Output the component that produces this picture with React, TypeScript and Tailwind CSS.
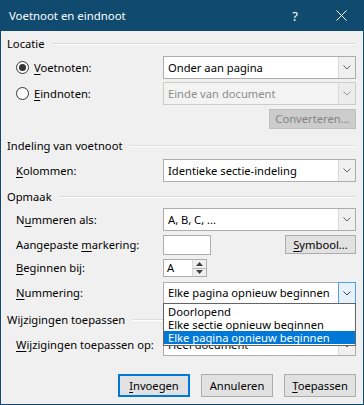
import type { ReactNode } from "react";

const Chevron = ({ color = "#606060" }: { color?: string }) => (
  <svg width="8" height="5" viewBox="0 0 8 5" fill="none">
    <path d="M0.5 0.5 L4 4 L7.5 0.5" stroke={color} strokeWidth="1" />
  </svg>
);

const U = ({ children }: { children: ReactNode }) => (
  <span className="underline underline-offset-2">{children}</span>
);

const Header = ({ title, className = "" }: { title: string; className?: string }) => (
  <div className={`flex items-center h-[16px] pl-[6px] pr-[8px] ${className}`}>
    <span>{title}</span>
    <div className="flex-1 ml-[7px] h-[2px] border-t border-t-[#dcdcdc] border-b border-b-white" />
  </div>
);

const Combo = ({
  text,
  disabled,
  active,
}: {
  text: string;
  disabled?: boolean;
  active?: boolean;
}) => (
  <div
    className={`w-[193px] h-full flex border ${
      disabled ? "border-[#cccccc] bg-[#f3f3f3]" : "border-[#adadad] bg-white"
    }`}
  >
    <div className={`flex-1 flex items-center pl-[4px] ${disabled ? "text-[#8c8c8c]" : ""}`}>
      {text}
    </div>
    {active ? (
      <div className="w-[18px] -my-px -mr-px border border-[#569de5] bg-[#e5f1fb] flex items-center justify-center">
        <Chevron color="#404040" />
      </div>
    ) : (
      <div
        className={`w-[17px] border-l flex items-center justify-center ${
          disabled ? "border-[#dadada] bg-[#ececec]" : "border-[#dadada] bg-[#f0f0f0]"
        }`}
      >
        <Chevron color={disabled ? "#9a9a9a" : "#606060"} />
      </div>
    )}
  </div>
);

const Button = ({
  children,
  primary,
  disabled,
  className = "",
}: {
  children: ReactNode;
  primary?: boolean;
  disabled?: boolean;
  className?: string;
}) => (
  <div
    className={`flex items-center justify-center ${
      primary
        ? "border-2 border-[#0078d7] bg-[#e1e1e1]"
        : disabled
        ? "border border-[#bfbfbf] bg-[#cccccc] text-[#838383]"
        : "border border-[#adadad] bg-[#e1e1e1]"
    } ${className}`}
  >
    {children}
  </div>
);

const Row = ({
  label,
  children,
  className = "",
}: {
  label: ReactNode;
  children: ReactNode;
  className?: string;
}) => (
  <div className={`flex items-stretch ${className}`}>
    <div className="w-[162px] flex items-center pl-[15px]">{label}</div>
    {children}
  </div>
);

const Radio = ({ checked }: { checked?: boolean }) => (
  <div className="w-[13px] h-[13px] rounded-full border border-[#333333] bg-white flex items-center justify-center">
    {checked && <div className="w-[7px] h-[7px] rounded-full bg-[#333333]" />}
  </div>
);

export default function App() {
  return (
    <div className="w-[364px] h-[405px] bg-[#f0f0f0] border-x border-b border-[#104b6f] flex flex-col font-['Segoe_UI','Noto_Sans',sans-serif] text-[11.2px] leading-[16px] text-black whitespace-nowrap relative select-none">
      {/* Title bar */}
      <div className="h-[31px] -mx-px bg-[#104b6f] text-white flex items-center pl-[9px]">
        <span className="flex-1 text-[11.4px]">Voetnoot en eindnoot</span>
        <span className="w-[46px] text-center text-[13px]">?</span>
        <div className="w-[46px] flex items-center justify-center">
          <svg width="11" height="11" viewBox="0 0 11 11">
            <path d="M0.5 0.5 L10.5 10.5 M10.5 0.5 L0.5 10.5" stroke="white" strokeWidth="1" />
          </svg>
        </div>
      </div>

      <Header title="Locatie" className="mt-[5px]" />

      <div className="flex items-stretch h-[23px] mt-[4px]">
        <div className="w-[162px] flex items-center pl-[15px] gap-[5px]">
          <Radio checked />
          <span>
            <U>V</U>oetnoten:
          </span>
        </div>
        <Combo text="Onder aan pagina" />
      </div>

      <div className="flex items-stretch h-[23px] mt-[3px]">
        <div className="w-[162px] flex items-center pl-[15px] gap-[5px]">
          <Radio />
          <span>
            <U>E</U>indnoten:
          </span>
        </div>
        <Combo text="Einde van document" disabled />
      </div>

      <div className="flex justify-end pr-[7px] mt-[4px]">
        <Button disabled className="w-[87px] h-[20px]">
          Converteren...
        </Button>
      </div>

      <Header title="Indeling van voetnoot" className="mt-[9px]" />

      <Row
        className="h-[23px] mt-[5px]"
        label={
          <span>
            <U>K</U>olommen:
          </span>
        }
      >
        <Combo text="Identieke sectie-indeling" />
      </Row>

      <Header title="Opmaak" className="mt-[7px]" />

      <Row
        className="h-[23px] mt-[3px]"
        label={
          <span>
            N<U>u</U>mmeren als:
          </span>
        }
      >
        <Combo text="A, B, C, ..." />
      </Row>

      <Row
        className="h-[20px] mt-[4px]"
        label={
          <span>
            Aangepaste <U>m</U>arkering:
          </span>
        }
      >
        <div className="w-[48px] border border-[#adadad] bg-white" />
        <div className="flex-1 flex justify-end pr-[7px]">
          <Button className="w-[71px] h-[19px]">
            <span>
              <U>S</U>ymbool...
            </span>
          </Button>
        </div>
      </Row>

      <Row
        className="h-[18px] mt-[4px]"
        label={
          <span>
            <U>B</U>eginnen bij:
          </span>
        }
      >
        <div className="w-[44px] border border-[#adadad] bg-white flex items-center">
          <span className="flex-1 pl-[3px]">A</span>
          <div className="w-[14px] h-full flex flex-col border-l border-[#dadada]">
            <div className="flex-1 bg-[#f0f0f0] border-b border-[#b5b5b5] flex items-center justify-center">
              <svg width="7" height="4" viewBox="0 0 7 4">
                <path d="M0 4 L3.5 0 L7 4 Z" fill="#404040" />
              </svg>
            </div>
            <div className="flex-1 bg-[#f0f0f0] flex items-center justify-center">
              <svg width="7" height="4" viewBox="0 0 7 4">
                <path d="M0 0 L3.5 4 L7 0 Z" fill="#404040" />
              </svg>
            </div>
          </div>
        </div>
      </Row>

      <Row
        className="h-[22px] mt-[5px]"
        label={
          <span>
            <U>N</U>ummering:
          </span>
        }
      >
        <Combo text="Elke pagina opnieuw beginnen" active />
      </Row>

      <Header title="Wijzigingen toepassen" className="mt-[8px]" />

      <Row
        className="h-[22px] mt-[6px]"
        label={
          <span>
            <U>W</U>ijzigingen toepassen op:
          </span>
        }
      >
        <Combo text="Heel document" />
      </Row>

      <div className="flex justify-end gap-[11px] pr-[7px] mt-[18px]">
        <Button primary className="w-[72px] h-[23px]">
          <span>
            <U>I</U>nvoegen
          </span>
        </Button>
        <Button className="w-[72px] h-[23px]">Annuleren</Button>
        <Button className="w-[72px] h-[23px]">
          <span>
            <U>T</U>oepassen
          </span>
        </Button>
      </div>

      {/* Open dropdown list of "Nummering" */}
      <div className="absolute left-[162px] top-[303px] w-[193px] border border-[#646464] bg-white flex flex-col py-px leading-[13px]">
        <div className="h-[13px] pl-[4px]">Doorlopend</div>
        <div className="h-[13px] pl-[4px]">Elke sectie opnieuw beginnen</div>
        <div className="h-[13px] pl-[4px] bg-[#0078d7] text-white">Elke pagina opnieuw beginnen</div>
      </div>
    </div>
  );
}
